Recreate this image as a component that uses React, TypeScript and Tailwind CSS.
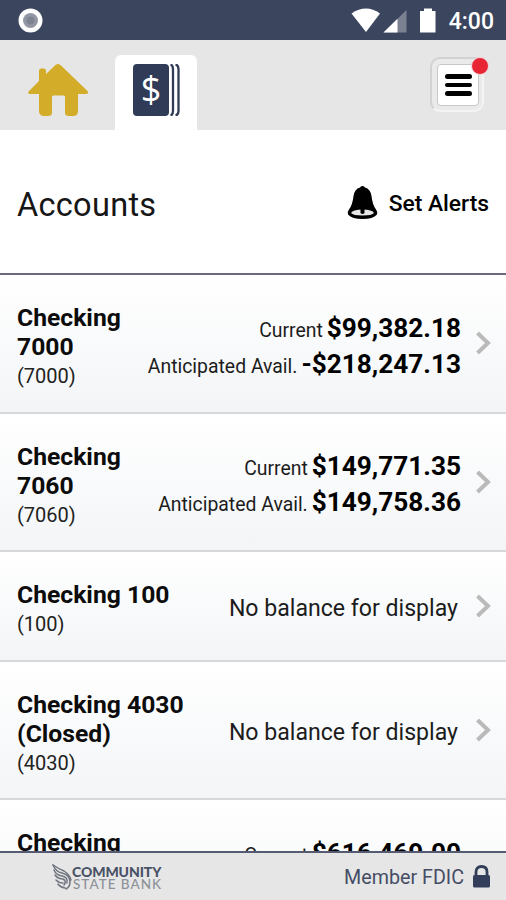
import React from 'react';

interface Account {
  id: string;
  name: string;
  number: string;
  current?: string;
  available?: string;
}

const accounts: Account[] = [
  { id: '1', name: 'Checking 7000', number: '(7000)', current: '$99,382.18', available: '-$218,247.13' },
  { id: '2', name: 'Checking 7060', number: '(7060)', current: '$149,771.35', available: '$149,758.36' },
  { id: '3', name: 'Checking 100', number: '(100)' },
  { id: '4', name: 'Checking 4030 (Closed)', number: '(4030)' },
  { id: '5', name: 'Checking 8010', number: '(8010)', current: '$616,469.00', available: '$616,469.00' },
];

function StatusBar() {
  return (
    <div className="flex h-10 shrink-0 items-center justify-between bg-[#3b455e] pl-[18px] pr-3">
      <svg width="25" height="25" viewBox="0 0 25 25">
        <circle cx="12.5" cy="12.5" r="12" fill="#fff" />
        <circle cx="12.5" cy="12.5" r="7.5" fill="#9397a3" />
        <circle cx="12.5" cy="12.5" r="4" fill="#7f8492" />
      </svg>
      <div className="flex items-center">
        <svg width="90" height="26" viewBox="0 0 90 26">
          <path d="M0.5 6.5Q15 -3.5 29 6.5L15 25Z" fill="#fff" />
          <path d="M55.5 3V25.5H32.5Z" fill="#7b8191" />
          <path d="M46.5 11.8V25.5H32.5Z" fill="#fff" />
          <path d="M73 1.5h8V4h3.500V25.500H69V4h4Z" fill="#fff" />
        </svg>
        <span className="ml-[8px] pt-[2px] text-[23px] font-medium leading-none text-white">4:00</span>
      </div>
    </div>
  );
}

function Header() {
  return (
    <div className="flex h-[90px] shrink-0 items-end bg-[#e6e6e6] pl-[28px] pr-[22px]">
      <svg className="mb-[13px]" width="61" height="54" viewBox="0 0 61 54">
        <path
          d="M30 1Q31 1 32.500 2L59.500 28Q61 31 58 31H50V48Q50 52.500 46 53H41Q37 53 37 50V34Q37 32.500 35.500 32.500H25.500Q24 32.500 24 34V50Q24 53 20 53H15Q11 52 11 48V31H2Q-1 31 1 28L11 18V8Q11 5.500 13 5.500H16Q18 5.500 18 8V11L27.500 2Q29 1 30 1Z"
          fill="#d3ad2a"
        />
      </svg>
      <div className="ml-[26px] flex h-[75px] w-[82px] justify-center rounded-t-[6px] bg-white pt-[9px]">
        <svg width="48" height="52" viewBox="0 0 48 52">
          <rect x="1" y="0" width="36" height="52" rx="4" fill="#303c57" />
          <path d="M38.500 0.500Q41 1 41 5V47Q41 51 38.500 51.500M43.500 0.500Q46.500 1 46.500 5V47Q46.500 51 43.500 51.500" fill="none" stroke="#303c57" strokeWidth="2.300" />
          <text x="19" y="38" textAnchor="middle" fontFamily="'Open Sans', sans-serif" fontSize="36" fill="#fff">$</text>
        </svg>
      </div>
      <div className="relative mb-[18px] ml-auto h-[55px] w-[54px] rounded-[10px] border-2 border-[#d2d2d2] border-b-[#f4f4f4] border-r-[#f4f4f4] bg-[#eaeaea] p-[5px]">
        <button className="flex h-[42px] w-[42px] flex-col items-center justify-center gap-1 rounded-[4px] border border-[#c8c8c8] bg-white">
          <span className="h-[4.5px] w-[27px] rounded-full bg-black" />
          <span className="h-[4.5px] w-[27px] rounded-full bg-black" />
          <span className="h-[4.5px] w-[27px] rounded-full bg-black" />
        </button>
        <span className="absolute -right-[7px] -top-[2px] h-[18px] w-[18px] rounded-full border border-[#f3dcdc] bg-[#e82535]" />
      </div>
    </div>
  );
}

function AccountRow({ account }: { account: Account }) {
  return (
    <li className="flex items-center border-b-2 border-[#d6d8da] bg-linear-to-b from-white to-[#f3f5f7] pl-[17px] pr-[15px]">
      <div className={account.current ? 'w-[120px] shrink-0 pb-[21.6px] pt-[28px]' : 'w-[190px] shrink-0 pb-[21.6px] pt-[28px]'}>
        <h2 className="text-[24.7px] font-bold leading-[29px] text-[#0c0c0c]">{account.name}</h2>
        <p className="pt-0.5 text-[20px] leading-[27px] text-[#222]">{account.number}</p>
      </div>
      {account.current ? (
        <div className="-ml-4 flex-1 whitespace-nowrap pt-[5px] text-[19.4px] text-[#1c1c1c]">
          <p className="flex h-9 items-baseline justify-end gap-1">
            Current <b className="text-[26.2px] leading-9 text-black">{account.current}</b>
          </p>
          <p className="flex h-9 items-baseline justify-end gap-1">
            Anticipated Avail. <b className="text-[26.2px] leading-9 text-black">{account.available}</b>
          </p>
        </div>
      ) : (
        <p className="flex-1 whitespace-nowrap pr-[3px] pt-[7px] text-right text-[23.1px] text-[#1c1c1c]">No balance for display</p>
      )}
      <svg className="ml-[15px] shrink-0" width="15" height="24" viewBox="0 0 15 24">
        <path d="M1.500 2L12 12L1.500 22" fill="none" stroke="#bababa" strokeWidth="4" />
      </svg>
    </li>
  );
}

function Footer() {
  return (
    <div className="flex h-[49px] shrink-0 items-center border-t-2 border-[#555c72] bg-[#e6e6e6] pl-[52px] pr-4 pt-px">
      <svg width="20" height="28" viewBox="0 0 20 28">
        <g fill="none" stroke="#6f747f" strokeWidth="1.500" strokeLinecap="round">
          <path d="M1 2Q4 9 10 10Q18 12 18 19Q18 24 14 26" />
          <path d="M2 7Q4 12 10 13Q16 14 15 20" />
          <path d="M3 12Q6 16 11 16Q15 18 12 22" />
          <path d="M4 17Q7 20 11 20" />
          <path d="M6 21Q8 24 13 25" />
          <path d="M1 2Q7 6 12 8Q18 12 19 17" />
        </g>
      </svg>
      <div className="flex flex-col whitespace-nowrap pt-px font-['Lato',sans-serif]">
        <span className="text-[14px] font-black leading-[13px] tracking-[-0.1px] text-[#4a5266]">COMMUNITY</span>
        <span className="pl-px text-[13.5px] font-medium leading-[13px] tracking-[1px] text-[#8d9199]">STATE BANK</span>
      </div>
      <span className="ml-auto pt-px text-[19.7px] text-[#454d65]">Member FDIC</span>
      <svg className="mb-px ml-[9px]" width="17" height="23" viewBox="0 0 17 23">
        <path d="M3 11V7Q3 1.500 8.500 1.500T14 7V11" fill="none" stroke="#333e5a" strokeWidth="2.800" />
        <rect y="10" width="17" height="12.500" rx="1.500" fill="#333e5a" />
      </svg>
    </div>
  );
}

export default function App() {
  return (
    <div className="flex h-[900px] w-[506px] flex-col overflow-hidden bg-white font-['Roboto',sans-serif]">
      <StatusBar />
      <Header />
      <div className="flex h-[145px] shrink-0 items-center justify-between border-b-2 border-[#6c6a7e] px-[17px] pt-[5px]">
        <h1 className="pt-0.5 text-[32.5px] tracking-[0.3px] text-[#161616]">Accounts</h1>
        <button className="flex items-center gap-[11px] text-[22.8px] font-medium text-black">
          <svg className="mb-[3px]" width="31" height="33" viewBox="0 0 31 33">
            <path
              d="M15.500 0Q17.500 0 18 1.500Q23.500 3 24.500 10Q25.500 19 29 23.500Q31 26 30 28.500Q26 33 15.500 33T1 28.500Q0 26 2 23.500Q5.500 19 6.500 10Q7.500 3 13 1.500Q13.500 0 15.500 0Z"
              fill="#000"
            />
            <path d="M4 27Q5.500 23.500 15.500 23.500T27 27Q25 29.500 15.500 29.500T4 27Z" fill="#e8e8e8" />
            <path d="M13.500 23H17.500V27Q15.500 29 13.500 27Z" fill="#000" />
          </svg>
          Set Alerts
        </button>
      </div>
      <ul className="min-h-0 flex-1 overflow-hidden">
        {accounts.map((account) => (
          <AccountRow key={account.id} account={account} />
        ))}
      </ul>
      <Footer />
    </div>
  );
}
